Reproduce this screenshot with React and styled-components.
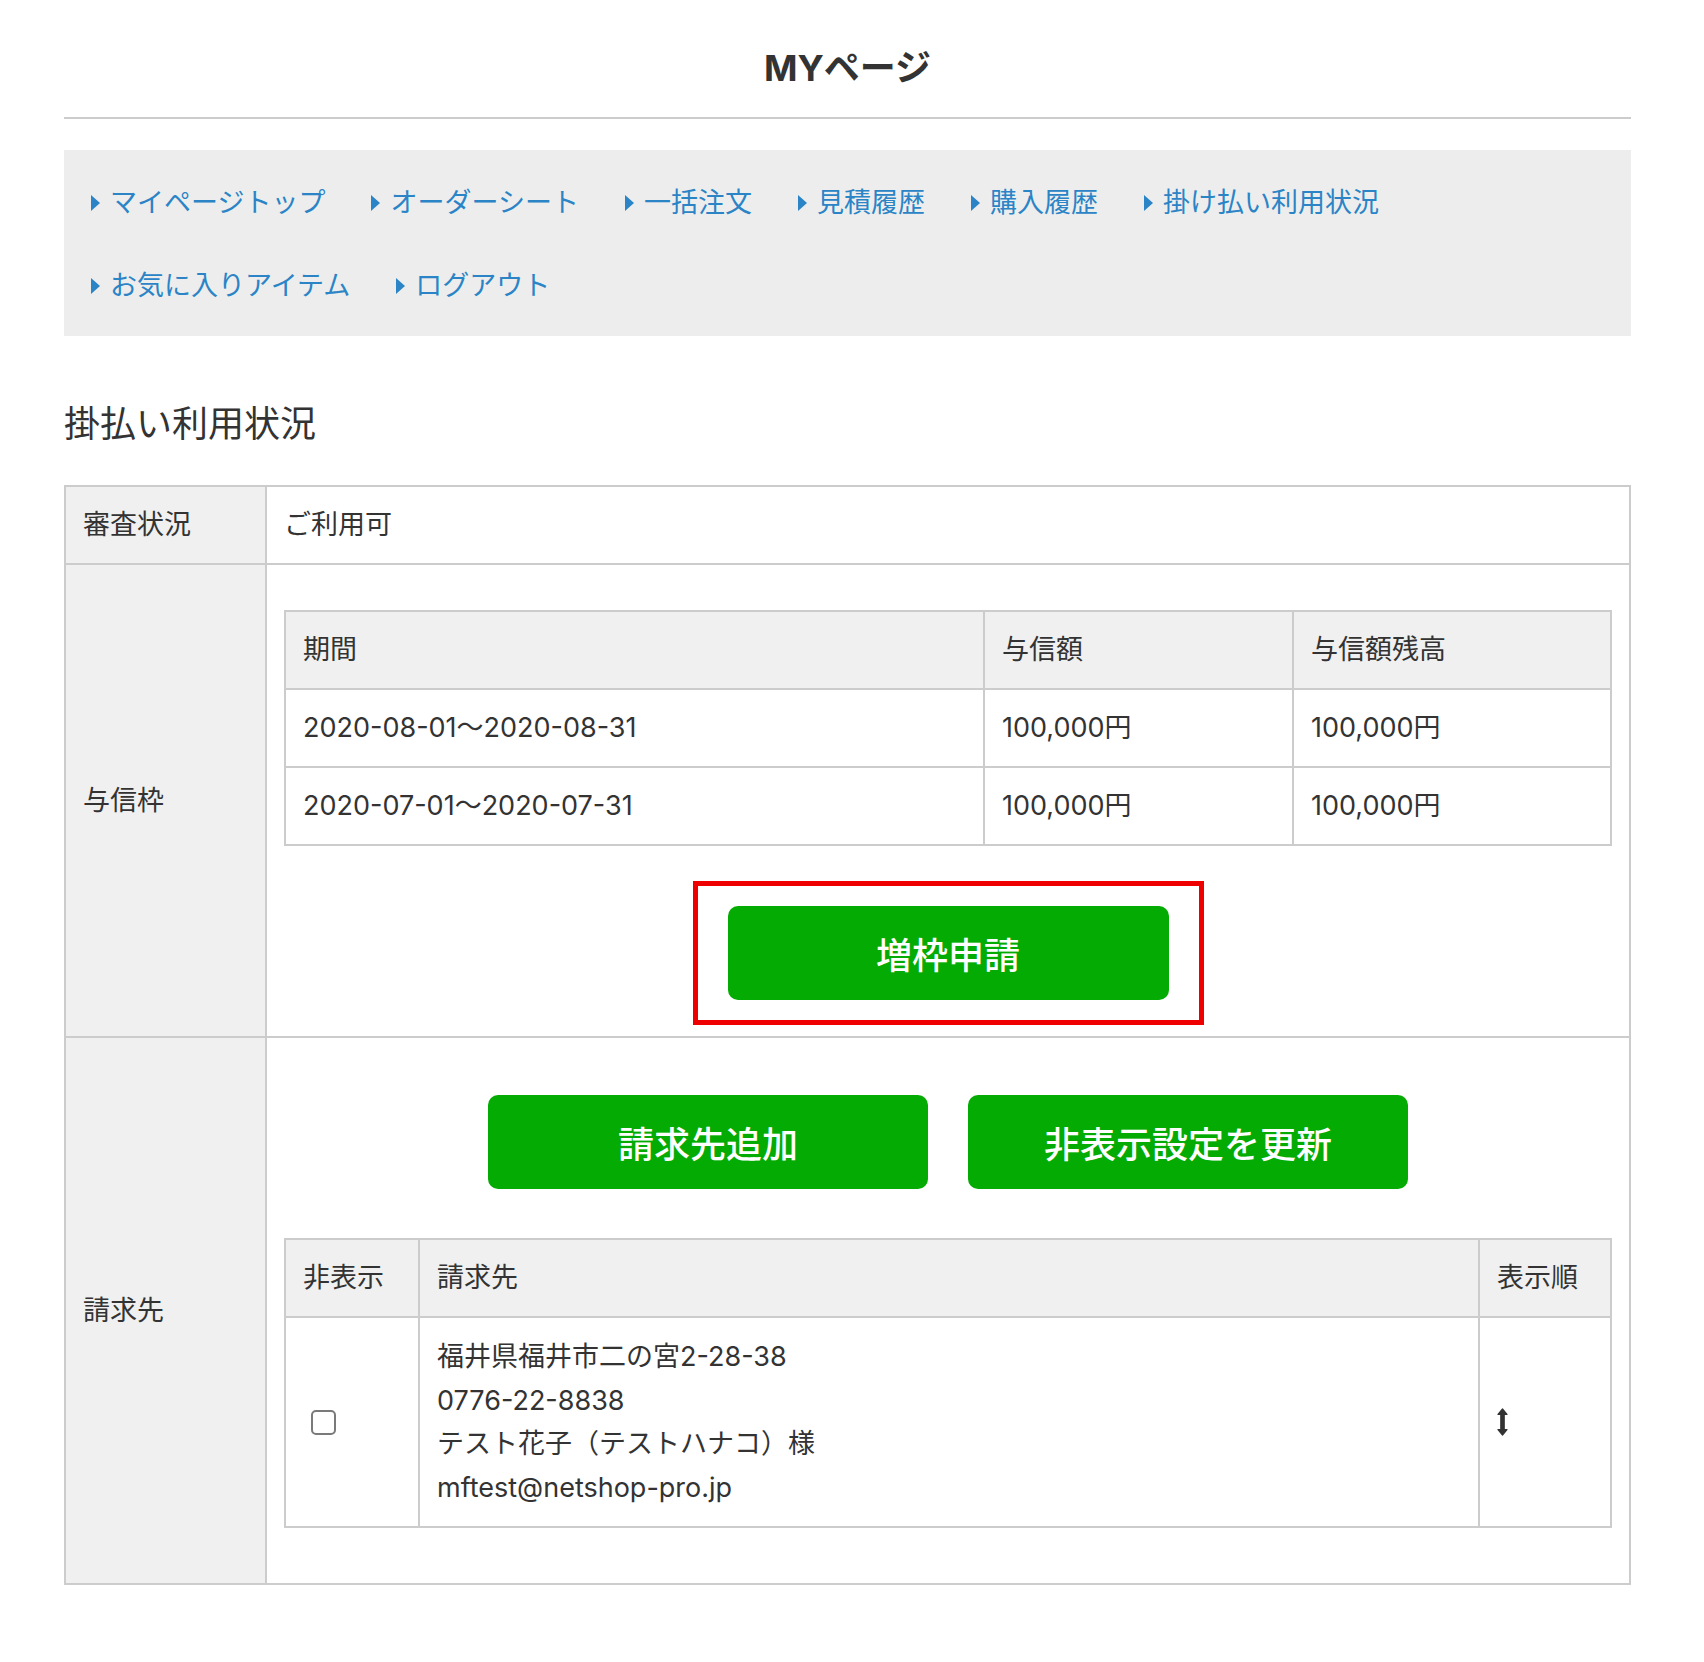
import React from 'react';
import styled, { createGlobalStyle } from 'styled-components';

const GlobalStyle = createGlobalStyle`
  body {
    margin: 0;
    background: #fff;
    color: #333;
    font-family: Inter, "Noto Sans CJK JP", "Noto Sans", sans-serif;
  }
`;

const Page = styled.div`
  width: 1567px;
  margin-left: 64px;
  padding-bottom: 80px;
`;

const Header = styled.header`
  padding: 44px 0 24px;
  border-bottom: 2px solid #ccc;
  text-align: center;
`;

const PageTitle = styled.h1`
  margin: 0;
  font-size: 36px;
  line-height: 49px;
  font-weight: 700;
  color: #333;
`;

const Nav = styled.nav`
  margin-top: 31px;
  padding: 31px 27px 29px;
  background: #ededed;
  display: flex;
  flex-wrap: wrap;
  row-gap: 40px;
`;

const NavLink = styled.a`
  display: inline-flex;
  align-items: center;
  gap: 10px;
  margin-right: 46px;
  font-size: 27px;
  line-height: 43px;
  color: #2a84c6;
  text-decoration: none;
  cursor: pointer;

  &::before {
    content: '';
    width: 0;
    height: 0;
    border-style: solid;
    border-width: 8px 0 8px 9px;
    border-color: transparent transparent transparent #2a84c6;
  }
`;

const SectionTitle = styled.h2`
  margin: 63px 0 36px;
  font-size: 36px;
  line-height: 50px;
  font-weight: 400;
  color: #333;
`;

const Table = styled.table`
  width: 100%;
  border-collapse: collapse;
  table-layout: fixed;
  border: 2px solid #ccc;
  font-size: 27px;
  line-height: 42px;
  color: #333;
  margin-top: ${p => p.$mt || 0}px;
  margin-bottom: ${p => p.$mb || 0}px;
`;

const Label = styled.th`
  background: #f0f0f0;
  border: 2px solid #ccc;
  padding: 17px;
  text-align: left;
  font-weight: 400;
  vertical-align: middle;
`;

const Value = styled.td`
  border: 2px solid #ccc;
  padding: ${p => p.$pad || '17px'};
  vertical-align: ${p => p.$valign || 'middle'};
`;

const HeadCell = styled.th`
  background: #f0f0f0;
  border: 2px solid #ccc;
  padding: 17px;
  text-align: left;
  font-weight: 400;
`;

const Cell = styled.td`
  border: 2px solid #ccc;
  padding: 17px;
  vertical-align: middle;
  line-height: ${p => p.$lh || '42px'};
`;

const Highlight = styled.div`
  box-sizing: border-box;
  width: 511px;
  margin: 35px auto 0;
  padding: 20px 30px;
  border: 5px solid #ee0000;
`;

const GreenButton = styled.button`
  display: block;
  width: ${p => p.$w || 441}px;
  height: 94px;
  padding: 0;
  border: none;
  border-radius: 10px;
  background: #03ab03;
  color: #fff;
  font-family: "Noto Sans CJK JP", sans-serif;
  font-size: 36px;
  font-weight: 500;
  cursor: pointer;
`;

const ButtonRow = styled.div`
  margin-top: 40px;
  display: flex;
  justify-content: center;
  gap: 40px;
`;

const Check = styled.input`
  appearance: none;
  display: block;
  width: 25px;
  height: 25px;
  margin: 0 0 0 8px;
  border: 2px solid #7a7a7a;
  border-radius: 5px;
  background: #fff;
  box-sizing: border-box;
`;

const SortIcon = () => (
  <svg width="11" height="28" viewBox="0 0 11 28" style={{ display: 'block' }}>
    <path
      d="M5.5 1 L10 6.5 L7.2 6.5 L7.2 21.5 L10 21.5 L5.5 27 L1 21.5 L3.8 21.5 L3.8 6.5 L1 6.5 Z"
      fill="#333"
      stroke="#333"
      strokeWidth="1.2"
      strokeLinejoin="round"
    />
  </svg>
);

const navItems = [
  'マイページトップ',
  'オーダーシート',
  '一括注文',
  '見積履歴',
  '購入履歴',
  '掛け払い利用状況',
  'お気に入りアイテム',
  'ログアウト',
];

const credits = [
  { period: '2020-08-01〜2020-08-31', amount: '100,000円', rest: '100,000円' },
  { period: '2020-07-01〜2020-07-31', amount: '100,000円', rest: '100,000円' },
];

export default function App() {
  return (
    <>
      <GlobalStyle />
      <Page>
        <Header>
          <PageTitle>MYページ</PageTitle>
        </Header>

        <Nav>
          {navItems.map(item => (
            <NavLink key={item}>{item}</NavLink>
          ))}
        </Nav>

        <SectionTitle>掛払い利用状況</SectionTitle>

        <Table>
          <colgroup>
            <col style={{ width: 201 }} />
            <col />
          </colgroup>
          <tbody>
            <tr>
              <Label>審査状況</Label>
              <Value>ご利用可</Value>
            </tr>
            <tr>
              <Label>与信枠</Label>
              <Value $pad="17px 17px 11px" $valign="top">
                <Table $mt={28}>
                  <colgroup>
                    <col style={{ width: 699 }} />
                    <col style={{ width: 309 }} />
                    <col />
                  </colgroup>
                  <thead>
                    <tr>
                      <HeadCell>期間</HeadCell>
                      <HeadCell>与信額</HeadCell>
                      <HeadCell>与信額残高</HeadCell>
                    </tr>
                  </thead>
                  <tbody>
                    {credits.map(c => (
                      <tr key={c.period}>
                        <Cell>{c.period}</Cell>
                        <Cell>{c.amount}</Cell>
                        <Cell>{c.rest}</Cell>
                      </tr>
                    ))}
                  </tbody>
                </Table>
                <Highlight>
                  <GreenButton type="button">増枠申請</GreenButton>
                </Highlight>
              </Value>
            </tr>
            <tr>
              <Label>請求先</Label>
              <Value $valign="top">
                <ButtonRow>
                  <GreenButton type="button" $w={440}>請求先追加</GreenButton>
                  <GreenButton type="button" $w={440}>非表示設定を更新</GreenButton>
                </ButtonRow>
                <Table $mt={49} $mb={38}>
                  <colgroup>
                    <col style={{ width: 134 }} />
                    <col />
                    <col style={{ width: 132 }} />
                  </colgroup>
                  <thead>
                    <tr>
                      <HeadCell>非表示</HeadCell>
                      <HeadCell>請求先</HeadCell>
                      <HeadCell>表示順</HeadCell>
                    </tr>
                  </thead>
                  <tbody>
                    <tr>
                      <Cell>
                        <Check type="checkbox" />
                      </Cell>
                      <Cell $lh="43.5px">
                        福井県福井市二の宮2-28-38<br />
                        0776-22-8838<br />
                        テスト花子（テストハナコ）様<br />
                        mftest@netshop-pro.jp
                      </Cell>
                      <Cell>
                        <SortIcon />
                      </Cell>
                    </tr>
                  </tbody>
                </Table>
              </Value>
            </tr>
          </tbody>
        </Table>
      </Page>
    </>
  );
}
